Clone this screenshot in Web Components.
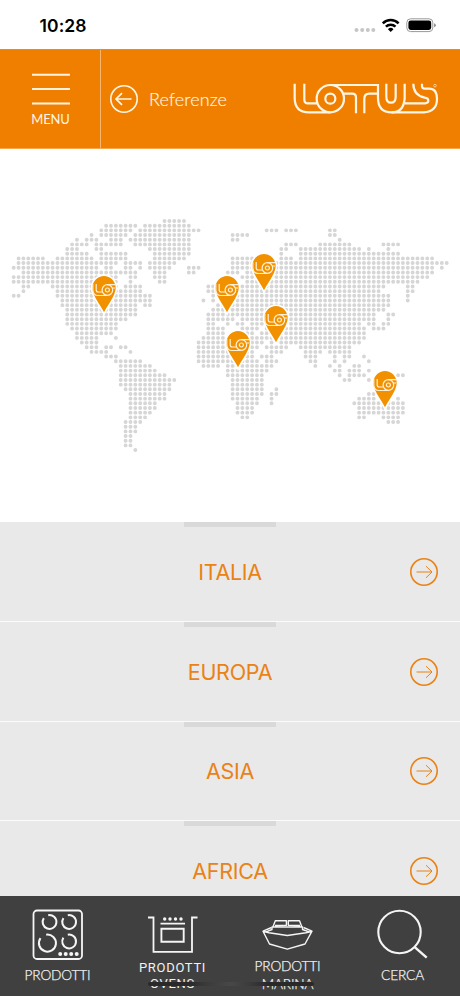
<!DOCTYPE html>
<html lang="it">
<head>
<meta charset="utf-8">
<title>Lotus – Referenze</title>
<style>
html,body{margin:0;height:100%;overflow:hidden;background:#fff}
</style>
</head>
<body>
<lotus-app></lotus-app>
<script>
const define=(name,html,setup)=>{
  const t=document.createElement('template');t.innerHTML=html;
  customElements.define(name,class extends HTMLElement{
    constructor(){super();this.attachShadow({mode:'open'}).append(t.content.cloneNode(true));}
    connectedCallback(){if(setup)setup(this,this.shadowRoot);}
  });
};

define('status-bar',`<style>
:host{display:flex;height:49px;box-sizing:border-box;padding:0 24px 0 39.5px;justify-content:space-between;background:#fff;color:#000;font:600 17.5px/51px Inter,sans-serif}
span{letter-spacing:.1px}
svg{display:block}
</style><span>10:28</span>
<svg width="84" height="49" viewBox="352 0 84 49">
<g fill="#c6c6c8"><circle cx="356.5" cy="30" r="2"/><circle cx="362.2" cy="30" r="2"/><circle cx="367.8" cy="30" r="2"/><circle cx="373.3" cy="30" r="2"/></g>
<g fill="none" stroke="#000" stroke-width="2.5"><path d="M382.8 23.3a11.3 11.3 0 0 1 15.8 0"/><path d="M385.9 26.7a6.9 6.9 0 0 1 9.6 0"/></g>
<path d="M387.9 29.2a4 4 0 0 1 5.6 0l-2.8 2.8z"/>
<rect x="406.8" y="18.8" width="26" height="12.8" rx="3.8" fill="none" stroke="#999" stroke-width="1"/><rect x="408.4" y="20.5" width="22.8" height="9.4" rx="2.3"/><path d="M434.1 23.2q1.7.7 1.7 2t-1.7 2z" fill="#888"/></svg>`);

define('lotus-logo',`<style>:host{display:block;width:147px;height:32px}svg{display:block;width:100%;height:100%}</style>
<svg viewBox="188 250 441 96" fill="none" stroke="#fff6e6" stroke-width="6.6">
<path d="M193 252V294Q193 338 236 338H299"/><path d="M222 252V300Q222 311 233 311H262"/>
<circle cx="300" cy="297" r="41"/><circle cx="300" cy="297" r="15"/>
<path d="M300 256H443V294Q443 338 484 338H580Q620 336 620 298Q620 267 596 267H583Q575 267 575 260V252"/>
<path d="M341 282H366Q377 282 377 294V341"/><path d="M443 282H417Q402 282 402 297V341"/>
<path d="M468 252V291Q468 309 482 309T496 291V252"/><path d="M523 252V296Q520 338 484 338"/>
<path d="M523 311H584Q594 310 594 303Q594 295 583 294Q549 286 549 252"/>
<circle cx="614" cy="258" r="4" stroke-width="3" opacity=".6"/></svg>`);

define('circle-arrow',`<style>:host{display:block;width:28px;height:28px}:host([left]) svg{transform:scaleX(-1)}svg{display:block;overflow:visible}:host([left]) .a{stroke-width:1.7}</style>
<svg width="28" height="28" fill="none" stroke="currentColor"><circle cx="14" cy="14" r="13.2" stroke-width="1.6"/><path class="a" d="M6.5 14H22M16 8.2L22 14L16 19.8" stroke-width="1"/></svg>`);

define('app-header',`<style>
:host{display:grid;grid-template-columns:101px 1fr auto;height:100px;box-sizing:border-box;background:#f07f00;color:#fff6e6;border-bottom:1px solid #f6a64c;border-top:1px solid #df8d30;font-family:Lato,sans-serif}
.menu{border-right:1px solid #f7b56d;display:flex;flex-direction:column;align-items:center;padding-top:23px;padding-left:1px}
.menu svg{display:block}
.menu b{font:400 13px/16px Lato,sans-serif;margin-top:4px;letter-spacing:-.2px}
.back{display:flex;align-items:center;gap:11px;padding-left:9px}
.back span{font:300 18px/24px Lato,sans-serif;letter-spacing:.1px;-webkit-text-stroke:.15px}
.back circle-arrow{margin-top:-1px}.back span{margin-top:-1px}
lotus-logo{margin:33px 20px 0 0}
</style>
<div class="menu"><svg width="38" height="34"><path d="M0 1.8H38M0 16.1H38M0 30.5H38" stroke="#fff3df" stroke-width="2"/></svg><b>MENU</b></div>
<div class="back"><circle-arrow left></circle-arrow><span>Referenze</span></div><lotus-logo></lotus-logo>`);

define('map-pin',`<style>:host{display:block;width:28px;height:42px}svg{display:block;overflow:visible}</style>
<svg width="28" height="42" viewBox="-14 -14 28 42"><path d="M0 25.2C-3.8 16.5-12.5 7.8-12.5-.8A12.5 13 0 0 1 12.5-.8C12.5 7.8 3.8 16.5 0 25.2Z" fill="#f29100" stroke="#fff" stroke-width="1.6"/>
<g fill="none" stroke="#fff1d8" stroke-width="1.2"><path d="M-11.2-5V1Q-10.8 6.5-6 6.5H3.5"/><path d="M-7.8-5V1Q-7.8 3-5.8 3H-1.8"/><circle cx="3.4" cy="1" r="5.3"/><circle cx="3.4" cy="1" r="2"/><path d="M3.3-4.4H11.8M8.4-1H11.2"/></g></svg>`);

const LAND=`31-35
19-25,27-36
18-24,26-38,52-54,56-58,65-66
16,18-23,25-36,45-48,65-66
13,15-17,20-22,24-36,45-46,67
12-15,17-22,25-36,56-58,63-69,76-79
11-13,17-18,28-36,55-56,59-71,73,77
11-15,18-23,29-36,55,59-79
1-6,9-16,18-23,29-35,45-49,55-57,59-86
1-21,23-26,28-33,45-89
0-17,19-20,23-24,26,28-32,36-38,45-86,88
2-25,29-31,36-37,44-46,48-86
0-21,24-25,29-31,47-85
0-21,24,30-31,48-83
2-3,8-21,23-26,40-41,47-76,81-82
2,9-26,40-41,47-75,81-82
0-1,9-28,41,46-77,81
10-28,39,41,45-77,81
10-25,27-28,42-77
11-25,41-76
11-25,40-74,77-78
11-23,40-45,47-53,55-74,77
11-21,40-41,44,46-47,49-52,55-71,73-74,76-77
12-21,40-43,47-50,52-72,74-76
13-20,40-43,47-49,51-72
13-17,21,39-43,46-72
14-17,38-51,53,55-71
15-17,19-20,22-23,38-50,52-56,59-69
16-19,24,38-49,53-55,60-63,65-69
19-21,38-49,51-53,60-62,66,68-69,72
21-26,38-50,52-54,61-62,66,68,73
22-28,39-42,44-53,62,65,67,70-71
22-29,44-52,66-67,69-71,73
22-31,44-51,67,69-72,79-80
22-33,45-51,68-69,73
22-32,45-51
23-32,45-51,54
24-31,45-51,53-54,73-74
24-31,45-50,53,71-74,79
24-29,46-50,53,70-80
24-29,46-49,71-80
24-28,46-49,71-80
24-27,47-48,71-72,76-79
23-26,77-79
23-25
23-25
23-24
23-24
23-24
25`;
define('world-map',`<style>
:host{display:block;position:relative;height:373px;background:#fff}
svg{display:block}map-pin{position:absolute}
</style><svg width="460" height="373" viewBox="0 149 460 373"><path fill="none" stroke="#d6d6d6" stroke-width="3.9" stroke-linecap="round"/></svg>`,
(el,root)=>{
  let d='';
  LAND.split('\n').forEach((row,r)=>row.split(',').forEach(s=>{
    const [a,b=a]=s.split('-').map(Number);
    for(let c=a;c<=b;c++)d+=`M${(13.7+4.865*c).toFixed(2)} ${(221+4.675*r).toFixed(2)}h.01`;
  }));
  root.querySelector('path').setAttribute('d',d);
  for(const [x,tip] of [[104,312.7],[226.5,312.7],[264.2,290.7],[275.6,343],[238.3,367.5],[385.3,407.5]]){
    const p=document.createElement('map-pin');p.style.left=x-14+'px';p.style.top=tip-149-38+'px';root.append(p);
  }
});

define('region-row',`<style>
:host{display:grid;grid-template-columns:1fr 92px 1fr;height:99.6px;box-sizing:border-box;background:#e9e9e9;border-bottom:1.6px solid #fbfbfb;color:#ea8215;align-items:center;flex:none}
.name{grid-column:2;display:flex;justify-content:center;height:100%;align-items:center;font:400 21.5px/30px Inter,sans-serif;letter-spacing:-.3px;white-space:nowrap;border-top:5px solid #d9d9d9;box-sizing:border-box;padding-bottom:4px}
circle-arrow{justify-self:end;margin:1px 22.5px 0 0}
</style><div class="name"><slot></slot></div><circle-arrow></circle-arrow>`);

define('tab-item',`<style>
:host{display:flex;flex-direction:column;align-items:center;color:#f2f2f2;width:115px}
::slotted(svg){display:block;flex:none}
.label{text-align:center;white-space:nowrap;font:300 13.7px/17.5px Lato,sans-serif;letter-spacing:-.15px;-webkit-text-stroke:.25px}
</style><slot name="icon"></slot><div class="label"><slot></slot></div>`);

define('tab-bar',`<style>
:host{display:grid;grid-template-columns:repeat(4,115px);height:100px;background:#404040;position:relative;overflow:hidden;flex:none}
svg{fill:none;stroke:#f5f5f5}
.home{position:absolute;left:148px;top:85.5px;width:166px;height:4.5px;border-radius:3px;background:linear-gradient(90deg,#292929 0 25%,#393939 34%,#484848 50%,#3a3a3a 62%,#292929 72%);filter:blur(.5px)}
.w{display:block;font:400 13px/15.5px Roboto,sans-serif;letter-spacing:.7px;-webkit-text-stroke:0}
</style>
<tab-item><svg slot="icon" width="115" height="70" viewBox="0 896 115 70"><rect x="33.5" y="910.5" width="48.5" height="48.5" rx="3.5" stroke-width="1.8"/>
<g stroke-width="2"><path d="M48.2 915.2A6.9 6.9 0 1 1 43.8 918.1"/><path d="M67.8 915.2A6.9 6.9 0 1 1 63.4 918.1"/><path d="M67.8 934.7A6.9 6.9 0 1 1 63.4 937.6"/><path d="M46.2 934.7A8.5 8.5 0 1 1 40.5 938.2"/></g>
<g fill="#f5f5f5" stroke="none"><circle cx="60.2" cy="954" r="2"/><circle cx="65.7" cy="954" r="2"/><circle cx="71.2" cy="954" r="2"/><circle cx="76.7" cy="954" r="2"/></g></svg>PRODOTTI</tab-item>
<tab-item><svg slot="icon" width="115" height="64" viewBox="115 896 115 64"><path d="M148 917.5H153.5V951.8H192V917.5H197.5" stroke-width="1.8"/><path d="M160.5 923.6H185M161.4 928.7H183.7V941.8H161.4Z" stroke-width="1.9"/><g fill="#f5f5f5" stroke="none"><circle cx="164.7" cy="919" r="1.7"/><circle cx="170" cy="919" r="1.7"/><circle cx="175.5" cy="919" r="1.7"/><circle cx="181" cy="919" r="1.7"/></g></svg><span class="w">PRODOTTI<br>OVENS</span></tab-item>
<tab-item><svg slot="icon" width="115" height="61" viewBox="230 896 115 61" stroke-width="1.4" stroke-linejoin="round"><path d="M263 931.2L271.5 927.5M312 931.2L303.5 927.5M263 931.2L269.5 944L287.3 949.2L305 944L312 931.2L306 932.8L287.3 935.5L269 932.8Z"/><path d="M266 931.8L272 929.5V927H302.5V929.5L309 931.8M273 926.8L275.3 920.7H286.4V925.2L275 925.5M301.8 926.8L299.5 920.7H288.3V925.2L300 925.5"/></svg>PRODOTTI<br>MARINA</tab-item>
<tab-item><svg slot="icon" width="115" height="70" viewBox="345 896 115 70"><circle cx="399.5" cy="932" r="21.2" stroke-width="2.1"/><path d="M414.7 947.2L426.7 957.7" stroke-width="2.4"/></svg>CERCA</tab-item>
<div class="home"></div>`);

define('lotus-app',`<style>
:host{display:grid;grid-template-rows:49px 100px 373px 374px 100px;width:460px;height:996px;background:#fff;overflow:hidden}
.list{overflow:hidden;display:flex;flex-direction:column;padding-top:.4px}
</style><status-bar></status-bar><app-header></app-header><world-map></world-map>
<div class="list"><region-row>ITALIA</region-row><region-row>EUROPA</region-row><region-row>ASIA</region-row><region-row>AFRICA</region-row></div>
<tab-bar></tab-bar>`);
</script>
</body>
</html>
